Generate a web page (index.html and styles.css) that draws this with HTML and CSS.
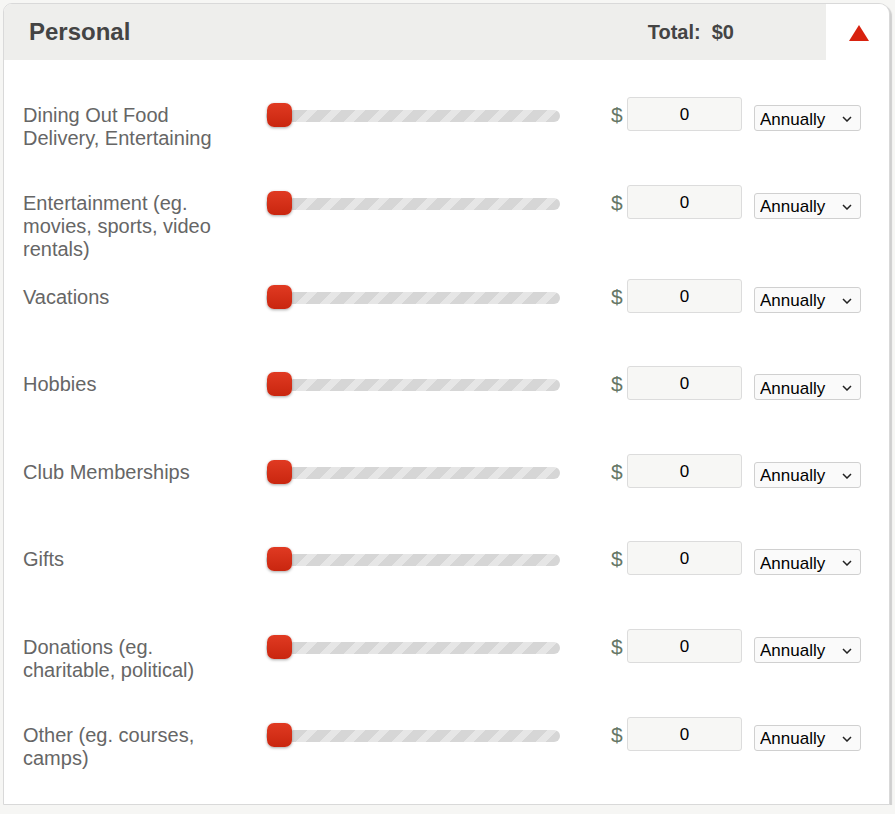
FILE: index.html
```html
<!DOCTYPE html>
<html lang="en">
<head>
<meta charset="utf-8">
<title>Personal</title>
<link rel="stylesheet" href="styles.css">
</head>
<body>
<div class="card">
  <div class="card-head">
    <h2 class="title">Personal</h2>
    <div class="total">Total:&nbsp; $0</div>
    <button class="toggle" aria-label="Collapse">
      <svg width="20" height="16" viewBox="0 0 20 16"><polygon points="10,0 20,16 0,16" fill="#d8220f"/></svg>
    </button>
  </div>
  <div class="card-body">
    <div class="row">
      <div class="label">Dining Out Food Delivery, Entertaining</div>
      <div class="slider"><div class="track"></div><div class="thumb"></div></div>
      <span class="dollar">$</span>
      <input class="amount" type="text" value="0">
      <span class="select-wrap"><select class="period"><option>Annually</option><option>Monthly</option><option>Weekly</option></select><svg class="chev" width="10" height="6" viewBox="0 0 10 6"><path d="M1 1 L5 5 L9 1" fill="none" stroke="#222" stroke-width="1.5"/></svg></span>
    </div>
    <div class="row">
      <div class="label">Entertainment (eg. movies, sports, video rentals)</div>
      <div class="slider"><div class="track"></div><div class="thumb"></div></div>
      <span class="dollar">$</span>
      <input class="amount" type="text" value="0">
      <span class="select-wrap"><select class="period"><option>Annually</option><option>Monthly</option><option>Weekly</option></select><svg class="chev" width="10" height="6" viewBox="0 0 10 6"><path d="M1 1 L5 5 L9 1" fill="none" stroke="#222" stroke-width="1.5"/></svg></span>
    </div>
    <div class="row">
      <div class="label">Vacations</div>
      <div class="slider"><div class="track"></div><div class="thumb"></div></div>
      <span class="dollar">$</span>
      <input class="amount" type="text" value="0">
      <span class="select-wrap"><select class="period"><option>Annually</option><option>Monthly</option><option>Weekly</option></select><svg class="chev" width="10" height="6" viewBox="0 0 10 6"><path d="M1 1 L5 5 L9 1" fill="none" stroke="#222" stroke-width="1.5"/></svg></span>
    </div>
    <div class="row">
      <div class="label">Hobbies</div>
      <div class="slider"><div class="track"></div><div class="thumb"></div></div>
      <span class="dollar">$</span>
      <input class="amount" type="text" value="0">
      <span class="select-wrap"><select class="period"><option>Annually</option><option>Monthly</option><option>Weekly</option></select><svg class="chev" width="10" height="6" viewBox="0 0 10 6"><path d="M1 1 L5 5 L9 1" fill="none" stroke="#222" stroke-width="1.5"/></svg></span>
    </div>
    <div class="row">
      <div class="label">Club Memberships</div>
      <div class="slider"><div class="track"></div><div class="thumb"></div></div>
      <span class="dollar">$</span>
      <input class="amount" type="text" value="0">
      <span class="select-wrap"><select class="period"><option>Annually</option><option>Monthly</option><option>Weekly</option></select><svg class="chev" width="10" height="6" viewBox="0 0 10 6"><path d="M1 1 L5 5 L9 1" fill="none" stroke="#222" stroke-width="1.5"/></svg></span>
    </div>
    <div class="row">
      <div class="label">Gifts</div>
      <div class="slider"><div class="track"></div><div class="thumb"></div></div>
      <span class="dollar">$</span>
      <input class="amount" type="text" value="0">
      <span class="select-wrap"><select class="period"><option>Annually</option><option>Monthly</option><option>Weekly</option></select><svg class="chev" width="10" height="6" viewBox="0 0 10 6"><path d="M1 1 L5 5 L9 1" fill="none" stroke="#222" stroke-width="1.5"/></svg></span>
    </div>
    <div class="row">
      <div class="label">Donations (eg. charitable, political)</div>
      <div class="slider"><div class="track"></div><div class="thumb"></div></div>
      <span class="dollar">$</span>
      <input class="amount" type="text" value="0">
      <span class="select-wrap"><select class="period"><option>Annually</option><option>Monthly</option><option>Weekly</option></select><svg class="chev" width="10" height="6" viewBox="0 0 10 6"><path d="M1 1 L5 5 L9 1" fill="none" stroke="#222" stroke-width="1.5"/></svg></span>
    </div>
    <div class="row">
      <div class="label">Other (eg. courses, camps)</div>
      <div class="slider"><div class="track"></div><div class="thumb"></div></div>
      <span class="dollar">$</span>
      <input class="amount" type="text" value="0">
      <span class="select-wrap"><select class="period"><option>Annually</option><option>Monthly</option><option>Weekly</option></select><svg class="chev" width="10" height="6" viewBox="0 0 10 6"><path d="M1 1 L5 5 L9 1" fill="none" stroke="#222" stroke-width="1.5"/></svg></span>
    </div>
  </div>
</div>
</body>
</html>
```
FILE: styles.css
```css
* { box-sizing: border-box; }
html, body { margin: 0; padding: 0; }
body {
  background: #f6f6f4;
  font-family: "Liberation Sans", Arial, sans-serif;
  padding: 3px 0 0 3px;
}
.card {
  width: 887px;
  background: #fff;
  border: 1px solid #d9d9d9;
  border-radius: 9px 11px 0 0;
  box-shadow: 2px 2px 1px #cfcfcf;
  overflow: hidden;
}
.card-head {
  display: flex;
  align-items: center;
  height: 56px;
  background: #eeeeec;
}
.title {
  margin: 0 0 0 25px;
  font-size: 24px;
  font-weight: bold;
  color: #444;
  flex: 1;
}
.total {
  font-size: 20px;
  font-weight: bold;
  color: #444;
  margin-right: 92px;
}
.toggle {
  width: 63px;
  height: 56px;
  background: #fff;
  border: 0;
  padding: 0;
  display: flex;
  align-items: center;
  justify-content: center;
  cursor: pointer;
}
.toggle svg { display: block; margin-left: 3px; margin-top: 2px; }
.card-body {
  padding: 37px 28px 0 19px;
}
.row {
  display: flex;
  align-items: flex-start;
  min-height: 87.6px;
}
.label {
  width: 243px;
  padding: 7px 38px 18px 0;
  font-size: 20px;
  color: #666;
}
.slider {
  position: relative;
  width: 294px;
  height: 24px;
  margin-top: 6px;
}
.track {
  position: absolute;
  left: 0; right: 0; top: 7px;
  height: 12px;
  border-radius: 6px;
  background: repeating-linear-gradient(-45deg, #d6d6d6 0 10px, #e6e6e6 10px 17px);
}
.thumb {
  position: absolute;
  left: 1px; top: 0;
  width: 25px;
  height: 24px;
  border-radius: 7px;
  background: linear-gradient(#e03a22, #c9260f);
  box-shadow: 0 1px 3px rgba(0,0,0,0.35);
}
.dollar {
  margin-left: 51px;
  width: 16px;
  font-size: 21px;
  color: #667766;
  padding-top: 6px;
  line-height: 24px;
}
.amount {
  width: 115px;
  height: 34px;
  border: 1px solid #dcdcdc;
  border-radius: 3px;
  background: #f7f7f5;
  text-align: center;
  font-family: "Liberation Sans", Arial, sans-serif;
  font-size: 17px;
  color: #000;
  padding: 2px 0 0;
}
.select-wrap {
  position: relative;
  margin-left: 12px;
  margin-top: 8px;
  width: 107px;
  height: 26px;
}
.period {
  -webkit-appearance: none;
  appearance: none;
  display: block;
  width: 107px;
  height: 26px;
  border: 1px solid #d0d0d0;
  border-radius: 3px;
  background: #fafafa;
  font-family: "Liberation Sans", Arial, sans-serif;
  font-size: 17px;
  color: #000;
  padding: 2px 0 0 5px;
}
.chev {
  position: absolute;
  right: 9px;
  top: 11px;
  pointer-events: none;
}
```
